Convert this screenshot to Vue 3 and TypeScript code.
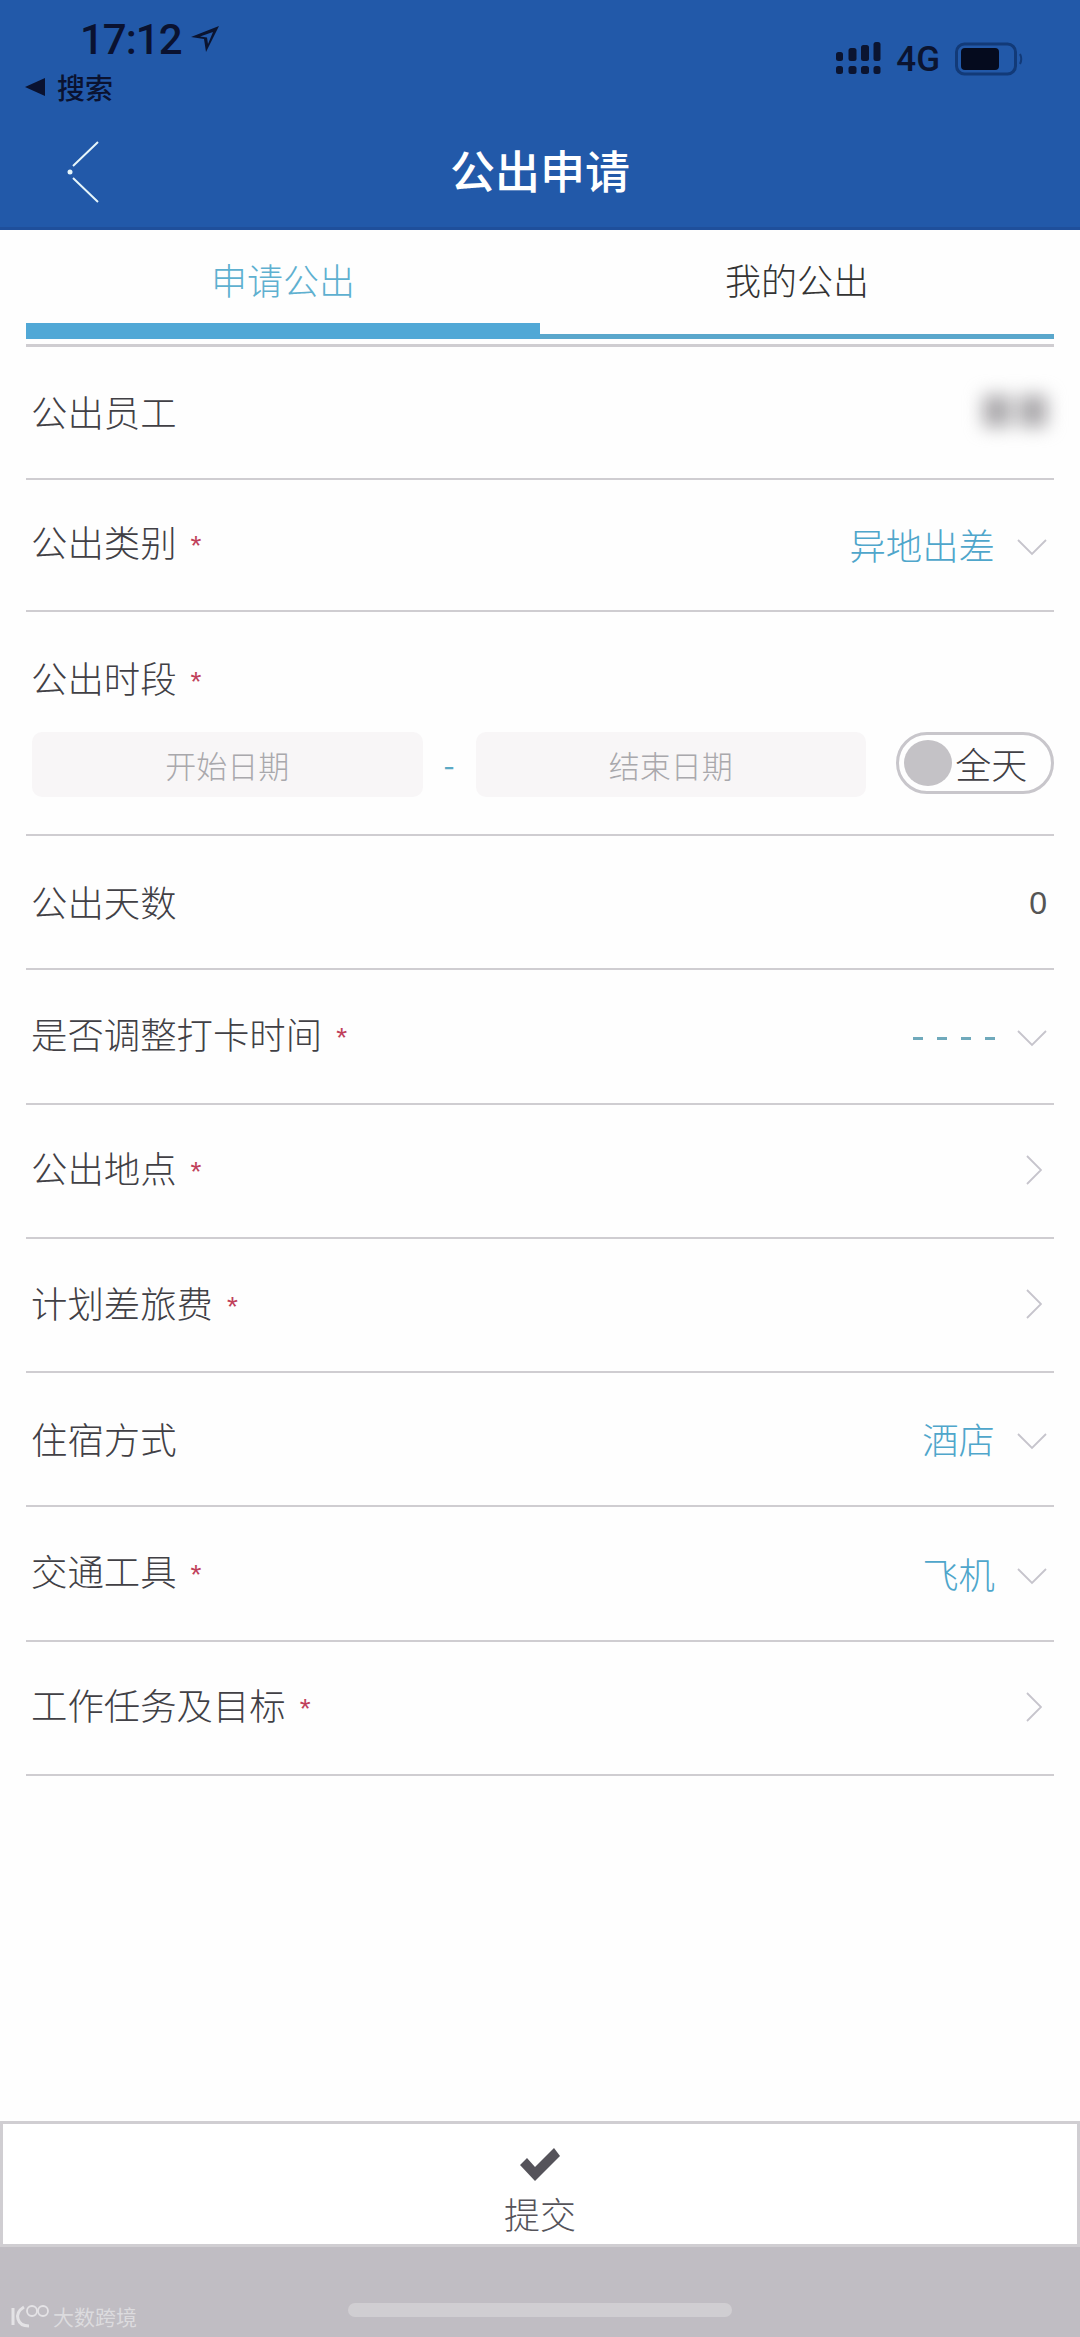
<template>
  <div class="page">
    <!-- 顶部蓝色区域 -->
    <header class="top">
      <div class="status">
        <div class="status-left">
          <div class="clock">
            <span class="time">17:12</span>
            <svg class="locate" width="30" height="30" viewBox="0 0 30 30">
              <path d="M29 1 L1 12 L14 14 L16 27 Z M23 7 L10 11.500 L17 12.500 L18 19 Z" fill="#0b1430" fill-rule="evenodd" />
            </svg>
          </div>
          <div class="back-app">
            <i class="tri"></i>
            <span>搜索</span>
          </div>
        </div>
        <div class="status-right">
          <svg width="45" height="33" viewBox="0 0 45 33">
            <g fill="#0b1430">
              <rect x="0" y="10" width="7" height="9" rx="2.500" />
              <rect x="12.500" y="6" width="8" height="13" rx="2.500" />
              <rect x="25" y="3" width="8" height="16" rx="2.500" />
              <rect x="37.500" y="0" width="7" height="19" rx="2.500" />
              <rect x="0" y="24" width="7" height="8" rx="2.500" />
              <rect x="12.500" y="24" width="8" height="8" rx="2.500" />
              <rect x="25" y="24" width="8" height="8" rx="2.500" />
              <rect x="37.500" y="24" width="7" height="8" rx="2.500" />
            </g>
          </svg>
          <span class="net">4G</span>
          <svg width="68" height="34" viewBox="0 0 68 34">
            <rect x="1.500" y="2" width="59" height="30" rx="8" fill="none" stroke="#123a78" stroke-width="3" />
            <rect x="6" y="6" width="38" height="22" rx="4" fill="#050b1e" />
            <path d="M65 12 q2.500 5 0 10" fill="none" stroke="#123a78" stroke-width="2" />
          </svg>
        </div>
      </div>
      <div class="nav">
        <svg class="back" width="34" height="64" viewBox="0 0 34 64">
          <path d="M7 26 L32 2 M7 38 L32 62" stroke="#e6f6fb" stroke-width="2" fill="none" />
          <circle cx="4" cy="32" r="2.500" fill="#e6f6fb" />
        </svg>
        <h1>公出申请</h1>
      </div>
    </header>

    <!-- 标签 -->
    <div class="tabs">
      <div
        v-for="(tab, index) in tabs"
        :key="tab"
        class="tab"
        :class="{ active: index === 0 }"
      >
        {{ tab }}
      </div>
    </div>

    <!-- 表单 -->
    <main class="form">
      <div class="row short">
        <span class="label">公出员工</span>
        <span class="masked"><i></i><i></i></span>
      </div>

      <template v-for="row in rows" :key="row.label">
        <div v-if="row.kind === 'dates'" class="row dates">
          <span class="label">{{ row.label }}<em>*</em></span>
          <div class="date-line">
            <div class="date-box">开始日期</div>
            <span class="date-sep">-</span>
            <div class="date-box">结束日期</div>
            <div class="allday"><i></i><span>全天</span></div>
          </div>
        </div>
        <div v-else class="row" :class="{ short: row.short }">
          <span class="label">{{ row.label }}<em v-if="row.required">*</em></span>
          <span class="right">
            <span v-if="row.kind === 'count'" class="count">{{ row.value }}</span>
            <span v-else-if="row.value === '----'" class="dashes"><i v-for="n in 4" :key="n"></i></span>
            <span v-else-if="row.value" class="value">{{ row.value }}</span>
            <svg v-if="row.kind === 'select'" class="down" width="30" height="18" viewBox="0 0 30 18">
              <path d="M1 2 L15 16 L29 2" fill="none" stroke="#c6c4cc" stroke-width="1.800" />
            </svg>
            <svg v-if="row.kind === 'link'" class="more" width="16" height="30" viewBox="0 0 16 30">
              <path d="M1 1 L15 15 L1 29" fill="none" stroke="#c6c4cc" stroke-width="1.800" />
            </svg>
          </span>
        </div>
      </template>
    </main>

    <!-- 提交 -->
    <div class="submit">
      <svg width="42" height="34" viewBox="0 0 42 34">
        <path d="M1 17 L8 10 L16 19 L35 0 L41 8 L16 33 Z" fill="#55535a" />
      </svg>
      <span>提交</span>
    </div>

    <footer class="bottom">
      <div class="mark">
        <svg width="40" height="24" viewBox="0 0 40 24">
          <path d="M3 4 V21 M14 3 Q6 8 8 15 Q10 22 19 22" fill="none" stroke="#e4e3e6" stroke-width="3" />
          <circle cx="22" cy="7" r="5" fill="none" stroke="#e4e3e6" stroke-width="1.800" />
          <circle cx="33" cy="7" r="5" fill="none" stroke="#e4e3e6" stroke-width="1.800" />
        </svg>
        <span>大数跨境</span>
      </div>
      <div class="home-bar"></div>
    </footer>
  </div>
</template>

<script setup lang="ts">
interface Row {
  label: string
  required: boolean
  kind: 'select' | 'link' | 'count' | 'dates'
  value?: string
  short?: boolean
}

const tabs = ['申请公出', '我的公出']

const rows: Row[] = [
  { label: '公出类别', required: true, kind: 'select', value: '异地出差', short: true },
  { label: '公出时段', required: true, kind: 'dates' },
  { label: '公出天数', required: false, kind: 'count', value: '0' },
  { label: '是否调整打卡时间', required: true, kind: 'select', value: '----' },
  { label: '公出地点', required: true, kind: 'link' },
  { label: '计划差旅费', required: true, kind: 'link' },
  { label: '住宿方式', required: false, kind: 'select', value: '酒店' },
  { label: '交通工具', required: true, kind: 'select', value: '飞机' },
  { label: '工作任务及目标', required: true, kind: 'link' }
]
</script>

<style>
html,
body {
  margin: 0;
  background: #fefefe;
}
</style>

<style scoped>
.page {
  width: 1080px;
  height: 2337px;
  display: flex;
  flex-direction: column;
  background: #fefefe;
  font-family: "Noto Sans CJK SC", "Liberation Sans", sans-serif;
  color: #414045;
  overflow: hidden;
}

.top {
  height: 230px;
  box-sizing: border-box;
  background: #2259a9;
  border-bottom: 3px solid #1f4f9b;
}

.status {
  height: 120px;
  display: flex;
  justify-content: space-between;
  padding: 18px 57px 0 25px;
  box-sizing: border-box;
}

.clock {
  display: flex;
  align-items: center;
  gap: 8px;
  margin-left: 55px;
  height: 44px;
}

.time {
  font-family: Roboto, "Liberation Sans", sans-serif;
  font-size: 42px;
  font-weight: 500;
  letter-spacing: -1px;
  line-height: 44px;
  color: #0a1230;
}

.back-app {
  display: flex;
  align-items: center;
  gap: 12px;
  margin-top: 5px;
  font-size: 28px;
  font-weight: 500;
  line-height: 40px;
  color: #0a1230;
}

.tri {
  width: 0;
  height: 0;
  border-style: solid;
  border-width: 9px 20px 9px 0;
  border-color: transparent #0a1230 transparent transparent;
}

.status-right {
  display: flex;
  align-items: flex-start;
  gap: 15px;
  padding-top: 24px;
}

.net {
  font-family: Roboto, "Liberation Sans", sans-serif;
  font-size: 35px;
  font-weight: 500;
  line-height: 36px;
  color: #0b1430;
}

.nav {
  position: relative;
  display: flex;
  justify-content: center;
  height: 107px;
}

.back {
  position: absolute;
  left: 66px;
  top: 20px;
}

.nav h1 {
  margin: 20px 0 0;
  font-size: 45px;
  font-weight: 500;
  line-height: 60px;
  color: #fff;
}

.tabs {
  display: flex;
  padding: 0 26px;
  margin-bottom: 5px;
}

.tab {
  flex: 1;
  height: 109px;
  box-sizing: border-box;
  padding-top: 23px;
  font-size: 36px;
  font-weight: 300;
  line-height: 52px;
  text-align: center;
  color: #333;
  border-bottom: 5px solid #5aa7cc;
}

.tab.active {
  color: #5eb0d0;
  border-bottom: 16px solid #51a8d6;
}

.form {
  flex: 1;
  margin: 0 26px;
  border-top: 3px solid #cfcdd1;
}

.row {
  height: 134.3px;
  box-sizing: border-box;
  padding: 0 7px 2px 5px;
  display: flex;
  align-items: center;
  justify-content: space-between;
  border-bottom: 2px solid #cfcdd1;
}

.row.short {
  height: 132.5px;
}

.label {
  font-size: 36.4px;
  font-weight: 300;
  line-height: 50px;
}

.label em {
  margin-left: 14px;
  font-family: "Liberation Sans", sans-serif;
  font-size: 28px;
  font-style: normal;
  color: #c0405a;
  vertical-align: 2px;
}

.right {
  display: flex;
  align-items: center;
  gap: 22px;
}

.value {
  font-size: 36.4px;
  font-weight: 300;
  line-height: 50px;
  color: #4fa6cb;
}

.count {
  margin-top: 4px;
  font-family: "Liberation Sans", sans-serif;
  font-size: 32px;
  color: #555;
}

.dashes {
  display: flex;
  gap: 14px;
  margin-top: 6px;
}

.dashes i {
  width: 10px;
  height: 3px;
  background: #6fa9bb;
}

.down {
  margin-top: 6px;
}

.more {
  margin-right: 5px;
}

.masked {
  display: flex;
  gap: 8px;
  filter: blur(9px);
}

.masked i {
  width: 28px;
  height: 32px;
  background: #aaa8ab;
}

.dates {
  height: 224px;
  display: block;
  padding: 40px 0 0;
}

.dates .label {
  display: block;
  padding-left: 5px;
}

.date-line {
  display: flex;
  align-items: flex-start;
  margin-top: 25px;
  padding-left: 6px;
}

.date-box {
  width: 391px;
  height: 65px;
  border-radius: 10px;
  background: #f8f6f7;
  font-size: 31px;
  font-weight: 300;
  line-height: 66px;
  text-align: center;
  color: #a9a8ac;
}

.date-sep {
  width: 53px;
  text-align: center;
  font-size: 32px;
  line-height: 62px;
  color: #5aa9c4;
}

.allday {
  margin-left: 30px;
  width: 158px;
  height: 62px;
  box-sizing: border-box;
  border: 3px solid #c8c6cb;
  border-radius: 31px;
  display: flex;
  align-items: center;
  padding-left: 5px;
  gap: 3px;
  font-size: 36px;
  font-weight: 300;
  color: #414045;
}

.allday i {
  width: 48px;
  height: 46px;
  border-radius: 50%;
  background: #c4c2c6;
}

.submit {
  height: 126px;
  box-sizing: border-box;
  border: 3px solid #d0ced2;
  background: #fff;
  display: flex;
  flex-direction: column;
  align-items: center;
  padding-top: 24px;
  font-size: 36px;
  font-weight: 300;
  line-height: 50px;
  color: #55535a;
}

.submit span {
  margin-top: 6px;
}

.bottom {
  position: relative;
  height: 90px;
  background: #c0bdc3;
  display: flex;
  justify-content: center;
  padding-top: 56px;
  box-sizing: border-box;
}

.home-bar {
  width: 384px;
  height: 14px;
  border-radius: 7px;
  background: #d0ced2;
}

.mark {
  position: absolute;
  left: 10px;
  bottom: 6px;
  display: flex;
  align-items: center;
  gap: 3px;
  font-size: 21px;
  line-height: 30px;
  color: #dcdbde;
}
</style>
